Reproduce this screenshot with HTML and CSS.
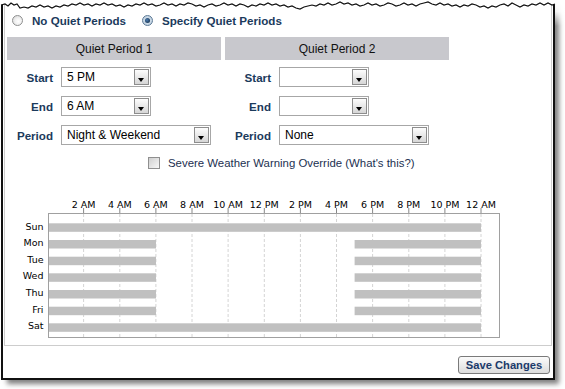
FILE: index.html
```html
<!DOCTYPE html>
<html>
<head>
<meta charset="utf-8">
<link rel="stylesheet" href="styles.css">
</head>
<body>
<div class="frame">
  <div class="panel">
    <div class="mode-row">
      <label class="radio-opt first"><span class="radio"></span><span class="opt-text">No Quiet Periods</span></label>
      <label class="radio-opt"><span class="radio checked"></span><span class="opt-text">Specify Quiet Periods</span></label>
    </div>
    <div class="periods">
      <div class="period p1">
        <div class="period-head">Quiet Period 1</div>
        <div class="fields">
          <div class="field"><span class="field-label">Start</span><div class="select short"><span class="sel-val">5 PM</span><span class="sel-btn"></span></div></div>
          <div class="field"><span class="field-label">End</span><div class="select short"><span class="sel-val">6 AM</span><span class="sel-btn"></span></div></div>
          <div class="field"><span class="field-label">Period</span><div class="select long"><span class="sel-val">Night &amp; Weekend</span><span class="sel-btn"></span></div></div>
        </div>
      </div>
      <div class="period p2">
        <div class="period-head">Quiet Period 2</div>
        <div class="fields">
          <div class="field"><span class="field-label">Start</span><div class="select short"><span class="sel-val"></span><span class="sel-btn"></span></div></div>
          <div class="field"><span class="field-label">End</span><div class="select short"><span class="sel-val"></span><span class="sel-btn"></span></div></div>
          <div class="field"><span class="field-label">Period</span><div class="select long"><span class="sel-val">None</span><span class="sel-btn"></span></div></div>
        </div>
      </div>
    </div>
    <div class="override">
      <span class="checkbox"></span>
      <span class="override-text">Severe Weather Warning Override <span class="whats">(What's this?)</span></span>
    </div>
    <svg class="chart" width="545" height="174" viewBox="5 171 545 174">
      <g class="grid">
        <line x1="83.6" y1="214" x2="83.6" y2="337"/>
        <line x1="119.8" y1="214" x2="119.8" y2="337"/>
        <line x1="155.9" y1="214" x2="155.9" y2="337"/>
        <line x1="192" y1="214" x2="192" y2="337"/>
        <line x1="228.1" y1="214" x2="228.1" y2="337"/>
        <line x1="264.3" y1="214" x2="264.3" y2="337"/>
        <line x1="300.4" y1="214" x2="300.4" y2="337"/>
        <line x1="336.5" y1="214" x2="336.5" y2="337"/>
        <line x1="372.6" y1="214" x2="372.6" y2="337"/>
        <line x1="408.8" y1="214" x2="408.8" y2="337"/>
        <line x1="444.9" y1="214" x2="444.9" y2="337"/>
        <line x1="481" y1="214" x2="481" y2="337"/>
      </g>
      <g class="ticks">
        <line x1="83.6" y1="208" x2="83.6" y2="213"/>
        <line x1="119.8" y1="208" x2="119.8" y2="213"/>
        <line x1="155.9" y1="208" x2="155.9" y2="213"/>
        <line x1="192" y1="208" x2="192" y2="213"/>
        <line x1="228.1" y1="208" x2="228.1" y2="213"/>
        <line x1="264.3" y1="208" x2="264.3" y2="213"/>
        <line x1="300.4" y1="208" x2="300.4" y2="213"/>
        <line x1="336.5" y1="208" x2="336.5" y2="213"/>
        <line x1="372.6" y1="208" x2="372.6" y2="213"/>
        <line x1="408.8" y1="208" x2="408.8" y2="213"/>
        <line x1="444.9" y1="208" x2="444.9" y2="213"/>
        <line x1="481" y1="208" x2="481" y2="213"/>
      </g>
      <rect class="plot" x="48.5" y="213.5" width="451" height="124"/>
      <g class="bars">
        <rect x="49" y="223.3" width="432" height="8.5"/>
        <rect x="49" y="240" width="107" height="8.5"/>
        <rect x="354.6" y="240" width="126.4" height="8.5"/>
        <rect x="49" y="256.7" width="107" height="8.5"/>
        <rect x="354.6" y="256.7" width="126.4" height="8.5"/>
        <rect x="49" y="273.3" width="107" height="8.5"/>
        <rect x="354.6" y="273.3" width="126.4" height="8.5"/>
        <rect x="49" y="290" width="107" height="8.5"/>
        <rect x="354.6" y="290" width="126.4" height="8.5"/>
        <rect x="49" y="306.7" width="107" height="8.5"/>
        <rect x="354.6" y="306.7" width="126.4" height="8.5"/>
        <rect x="49" y="323.3" width="432" height="8.5"/>
      </g>
      <g class="axis-labels">
        <text x="83.6" y="207.5">2 AM</text>
        <text x="119.8" y="207.5">4 AM</text>
        <text x="155.9" y="207.5">6 AM</text>
        <text x="192" y="207.5">8 AM</text>
        <text x="228.1" y="207.5">10 AM</text>
        <text x="264.3" y="207.5">12 PM</text>
        <text x="300.4" y="207.5">2 PM</text>
        <text x="336.5" y="207.5">4 PM</text>
        <text x="372.6" y="207.5">6 PM</text>
        <text x="408.8" y="207.5">8 PM</text>
        <text x="444.9" y="207.5">10 PM</text>
        <text x="481" y="207.5">12 AM</text>
      </g>
      <g class="day-labels">
        <text x="43.5" y="229.8">Sun</text>
        <text x="43.5" y="246.2">Mon</text>
        <text x="43.5" y="262.8">Tue</text>
        <text x="43.5" y="279.4">Wed</text>
        <text x="43.5" y="296">Thu</text>
        <text x="43.5" y="312.7">Fri</text>
        <text x="43.5" y="329.4">Sat</text>
      </g>
    </svg>
  </div>
  <div class="actions"><button class="save">Save Changes</button></div>
</div>
<svg class="torn" width="565" height="26" viewBox="0 0 565 26">
  <defs>
    <linearGradient id="fadeTop" x1="0" y1="0" x2="0" y2="1">
      <stop offset="0" stop-color="#fff" stop-opacity="1"/>
      <stop offset="0.45" stop-color="#fff" stop-opacity="0.9"/>
      <stop offset="1" stop-color="#fff" stop-opacity="0"/>
    </linearGradient>
  </defs>
  <rect x="555" y="0" width="10" height="26" fill="url(#fadeTop)"/>
  <polygon fill="#fff" points="0,0 556,0 555,4 552,5 548,3 544,5 540,3 536,5 532,4 528,6 524,5 520,7 516,5 512,3 508,6 504,4 500,5 496,7 492,6 488,8 484,6 480,7 476,5 472,4 468,6 464,5 460,7 456,5 452,6 448,4 444,5 440,3 436,5 432,4 428,2 424,3 420,4 416,6 412,4 408,5 404,3 400,5 396,6 392,4 388,3 384,5 380,6 376,4 372,5 368,3 364,5 360,6 356,4 352,5 348,3 344,4 340,2 336,4 332,5 328,3 324,5 320,4 316,6 312,5 308,6 304,7 300,9 296,8 292,6 288,7 284,5 280,6 276,4 272,5 268,3 264,5 260,4 256,6 252,5 248,7 244,5 240,4 236,6 232,4 228,5 224,3 220,5 216,6 212,4 208,5 204,7 200,5 196,6 192,4 188,3 184,5 180,4 176,6 172,4 168,5 164,3 160,5 156,6 152,4 148,5 144,3 140,5 136,4 132,6 128,5 124,7 120,5 116,6 112,4 108,5 104,3 100,5 96,4 92,6 88,4 84,5 80,3 76,5 72,4 68,6 64,5 60,7 56,6 52,8 48,6 44,7 40,5 36,7 32,6 28,8 24,7 20,8 17,4 14,5 11,3 8,6 5,4 1,5 0,5"/>
  <polyline fill="none" stroke="#111" stroke-width="1.2" points="1,5 5,4 8,6 11,3 14,5 17,4 20,8 24,7 28,8 32,6 36,7 40,5 44,7 48,6 52,8 56,6 60,7 64,5 68,6 72,4 76,5 80,3 84,5 88,4 92,6 96,4 100,5 104,3 108,5 112,4 116,6 120,5 124,7 128,5 132,6 136,4 140,5 144,3 148,5 152,4 156,6 160,5 164,3 168,5 172,4 176,6 180,4 184,5 188,3 192,4 196,6 200,5 204,7 208,5 212,4 216,6 220,5 224,3 228,5 232,4 236,6 240,4 244,5 248,7 252,5 256,6 260,4 264,5 268,3 272,5 276,4 280,6 284,5 288,7 292,6 296,8 300,9 304,7 308,6 312,5 316,6 320,4 324,5 328,3 332,5 336,4 340,2 344,4 348,3 352,5 356,4 360,6 364,5 368,3 372,5 376,4 380,6 384,5 388,3 392,4 396,6 400,5 404,3 408,5 412,4 416,6 420,4 424,3 428,2 432,4 436,5 440,3 444,5 448,4 452,6 456,5 460,7 464,5 468,6 472,4 476,5 480,7 484,6 488,8 492,6 496,7 500,5 504,4 508,6 512,3 516,5 520,7 524,5 528,6 532,4 536,5 540,3 544,5 548,3 552,5 555,4"/>
</svg>
</body>
</html>
```

FILE: styles.css
```css
* { box-sizing: border-box; }

html, body {
  margin: 0;
  padding: 0;
}

body {
  width: 565px;
  height: 389px;
  position: relative;
  overflow: hidden;
  background: #fff;
  font-family: "Liberation Sans", Arial, sans-serif;
  font-size: 12px;
  color: #000;
}

.frame {
  margin-left: 1px;
  width: 554px;
  height: 380px;
  border: 2px solid #111;
  border-top: none;
  background: #fff;
  box-shadow: 5px 5px 5px -1px rgba(0, 0, 0, 0.5);
  display: flex;
  flex-direction: column;
}

.panel {
  margin: 0 1px;
  border: 1px solid #cdcdcd;
  border-top: none;
  padding-top: 13px;
}

/* radio row */
.mode-row {
  display: flex;
  align-items: center;
  height: 14px;
  padding-left: 7px;
}

.radio-opt {
  display: flex;
  align-items: center;
  gap: 9px;
}

.radio-opt.first { width: 130px; }

.radio {
  width: 11px;
  height: 11px;
  border-radius: 50%;
  border: 1px solid #8e8f8f;
  background: radial-gradient(circle at 60% 60%, #ffffff 0%, #f2f2f2 40%, #d2d2d2 100%);
  position: relative;
  flex: none;
}

.radio.checked {
  border-color: #5d7a96;
  background: radial-gradient(circle at 50% 50%, #dde8f2 0%, #b6c9da 100%);
}

.radio.checked::after {
  content: "";
  position: absolute;
  left: 2px;
  top: 2px;
  width: 5px;
  height: 5px;
  border-radius: 50%;
  background: radial-gradient(circle at 40% 40%, #4a7bb0 0%, #1a3552 80%);
}

.opt-text {
  font-weight: bold;
  font-size: 11.6px;
  color: #1b3a5c;
}

/* period columns */
.periods {
  display: flex;
  gap: 4px;
  margin-top: 10px;
  padding-left: 2px;
}

.period.p1 { width: 214px; }
.period.p2 { width: 224px; }

.period-head {
  height: 23px;
  background: #c8c8cd;
  display: flex;
  align-items: center;
  justify-content: center;
  font-size: 12px;
  color: #111;
}

.fields {
  margin-top: 7px;
  display: flex;
  flex-direction: column;
  gap: 9px;
}

.field {
  display: flex;
  align-items: center;
  height: 20px;
}

.field-label {
  width: 46px;
  margin-right: 8px;
  text-align: right;
  font-weight: bold;
  font-size: 11.6px;
  color: #1b3a5c;
}

.select {
  height: 20px;
  border: 1px solid #a7a7a7;
  padding: 1px;
  display: flex;
  align-items: center;
  justify-content: space-between;
  background: #fff;
}

.select.short { width: 90px; }
.select.long { width: 150px; }

.sel-val {
  padding-left: 4px;
  font-size: 12px;
  color: #000;
}

.sel-btn {
  width: 15px;
  height: 16px;
  border: 1px solid #8d8d8d;
  background: linear-gradient(#fdfdfd, #d6d6d6);
  position: relative;
  flex: none;
}

.sel-btn::after {
  content: "";
  position: absolute;
  left: 3px;
  top: 8px;
  border-left: 3.5px solid transparent;
  border-right: 3.5px solid transparent;
  border-top: 4px solid #000;
}

/* override checkbox */
.override {
  margin-top: 10px;
  height: 16px;
  display: flex;
  align-items: center;
  padding-left: 143px;
  gap: 8px;
}

.checkbox {
  width: 12px;
  height: 12px;
  border: 1px solid #8f8f8f;
  background: linear-gradient(135deg, #cfcfcf, #f7f7f7);
  flex: none;
}

.override-text {
  font-size: 11.4px;
  color: #1b3050;
}

/* chart */
.chart {
  display: block;
  margin-left: 0;
}

.chart .grid line {
  stroke: #d4d4d4;
  stroke-width: 1;
  stroke-dasharray: 3 2;
}

.chart .ticks line {
  stroke: #888;
  stroke-width: 1;
}

.chart .plot {
  fill: none;
  stroke: #a0a0a0;
  stroke-width: 1;
}

.chart .bars rect {
  fill: #c0c0c0;
}

.chart text {
  font-family: "DejaVu Sans", sans-serif;
  font-size: 9.5px;
  fill: #000;
}

.chart .axis-labels text { text-anchor: middle; }
.chart .day-labels text { text-anchor: end; }

/* actions */
.actions {
  display: flex;
  justify-content: flex-end;
  padding-right: 3px;
  margin-top: 10px;
}

.save {
  width: 92px;
  height: 18px;
  padding: 0;
  border: 1px solid #7a7a7a;
  border-radius: 3px;
  background: linear-gradient(#fbfbfb, #dcdcdc);
  font-family: "Liberation Sans", Arial, sans-serif;
  font-weight: bold;
  font-size: 11.2px;
  color: #1b3a6a;
}

/* torn top edge overlay */
.torn {
  position: absolute;
  left: 0;
  top: 0;
  pointer-events: none;
}
```
